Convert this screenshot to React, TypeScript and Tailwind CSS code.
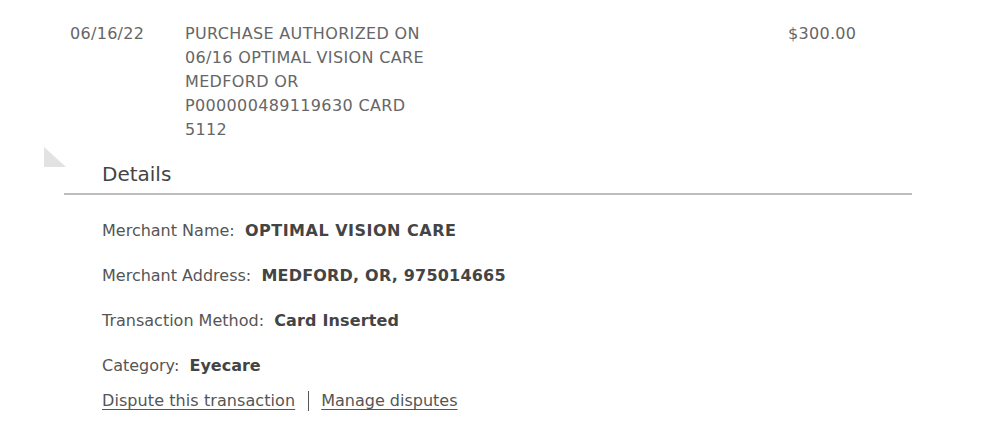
export default function App() {
  return (
    <div className="w-[1001px] h-[426px] bg-white text-[16px] leading-[24px] text-[#666]" style={{ fontFamily: '"DejaVu Sans", Verdana, sans-serif' }}>
      {/* Transaction row */}
      <div className="flex pt-[22px]">
        <div className="w-[185px] pl-[70px] tracking-[0.3px]">06/16/22</div>
        <div className="w-[252px] tracking-[0.35px]">PURCHASE AUTHORIZED ON 06/16 OPTIMAL VISION CARE MEDFORD OR P000000489119630 CARD 5112</div>
        <div className="ml-[351px] tracking-[0.3px]">$300.00</div>
      </div>

      {/* Details panel */}
      <div className="flex">
        <div className="w-[64px] pl-[44px] pt-[5px]">
          <div className="w-0 h-0 border-t-[20px] border-t-transparent border-l-[22px] border-l-[#e2e2e2]" />
        </div>
        <div className="w-[848px]">
          <div className="pl-[38px] pt-[18px] pb-[5px] text-[20px] leading-[28px] text-[#444]">Details</div>
          <div className="h-[2px] bg-[#bdbdbd]" />
          <div className="pl-[38px] pt-[24px] text-[#555]">
            <div className="flex flex-col gap-[21px]">
              <div>Merchant Name:&nbsp; <span className="font-bold text-[#444] tracking-[0.5px]">OPTIMAL VISION CARE</span></div>
              <div>Merchant Address:&nbsp; <span className="font-bold text-[#444] tracking-[0.2px]">MEDFORD, OR, 975014665</span></div>
              <div>Transaction Method:&nbsp; <span className="font-bold text-[#444] tracking-[0.15px]">Card Inserted</span></div>
              <div>Category:&nbsp; <span className="font-bold text-[#444]">Eyecare</span></div>
            </div>
            <div className="flex items-center mt-[11px]">
              <a className="underline underline-offset-[3px] text-[#555] tracking-[0.08px]">Dispute this transaction</a>
              <span className="ml-[13px] mr-[12px] w-px h-[20px] bg-[#555]" />
              <a className="underline underline-offset-[3px] text-[#555]">Manage disputes</a>
            </div>
          </div>
        </div>
      </div>
    </div>
  )
}
